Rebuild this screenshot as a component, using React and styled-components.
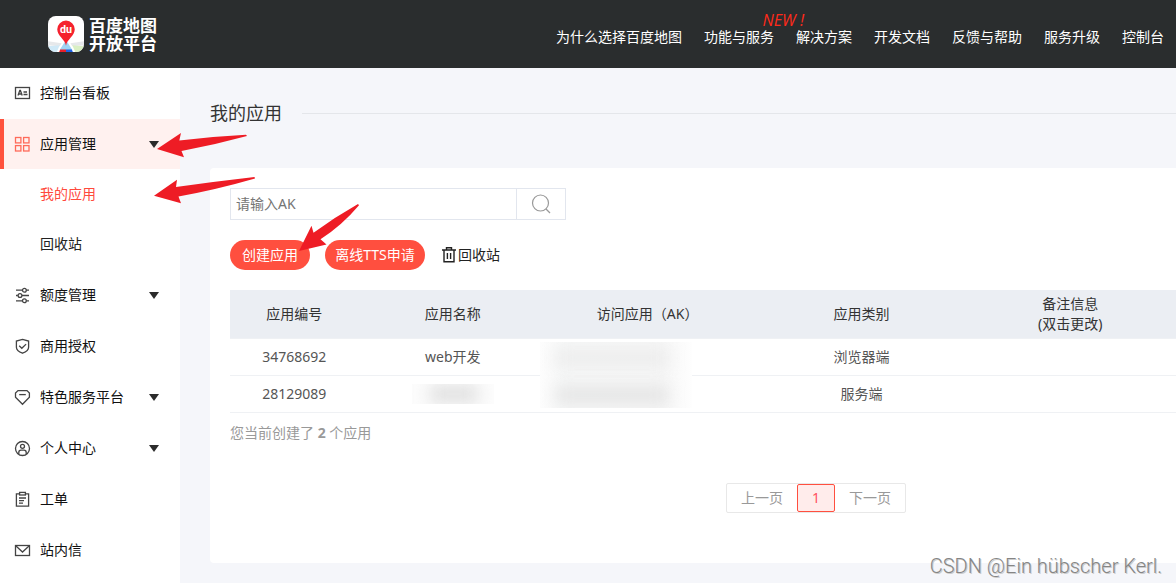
import React from 'react'
import styled, { createGlobalStyle } from 'styled-components';

const GlobalStyle = createGlobalStyle`
    * {
        box-sizing: border-box;
    }

    body {
        margin: 0;
        font-family: "Noto Sans", "Noto Sans CJK SC", sans-serif;
        font-size: 14px;
        line-height: 20px;
        color: #333;
        background-color: #f5f6fa;
    }

    a {
        color: inherit;
        text-decoration: none;
    }

    button, input {
        font: inherit;
    }
`

const Page = styled.div`
    position: relative;
    min-height: 100vh;
    display: flex;
    flex-direction: column;
    overflow: hidden;
`

const Header = styled.header`
    display: flex;
    justify-content: space-between;
    align-items: center;
    height: 68px;
    padding: 0 12px 0 48px;
    background-color: #2a2d2e;
    color: #fff;
`

const Logo = styled.a`
    display: flex;
    align-items: center;
    gap: 5px;
    font-family: "Noto Sans CJK SC", sans-serif;
    font-size: 17px;
    font-weight: 700;
    line-height: 18px;
`

const TopNav = styled.nav`
    display: flex;
    gap: 22px;
    padding-top: 6px;
    white-space: nowrap;
`

const TopLink = styled.a`
    position: relative;
`

const NewBadge = styled.span`
    position: absolute;
    right: -30px;
    top: -17px;
    color: #ff2a1a;
    font-family: "Open Sans", sans-serif;
    font-size: 16px;
    font-style: italic;
    font-weight: 500;
`

const Body = styled.div`
    flex: 1;
    display: flex;
`

const Sidebar = styled.nav`
    flex: 0 0 180px;
    display: flex;
    flex-direction: column;
    gap: 1px;
    background-color: #fff;
`

const MenuItem = styled.a`
    display: flex;
    align-items: center;
    height: 50px;
    padding: 0 21px 0 ${(props) => (props.$active ? '10px' : '14px')};
    border-left: ${(props) => (props.$active ? '4px solid #ff523d' : 'none')};
    background-color: ${(props) => (props.$active ? '#fff1ef' : 'transparent')};
    color: #111;

    .icon {
        margin-right: 9px;
        color: ${(props) => (props.$active ? '#ff6b5a' : '#444')};
    }

    .caret {
        margin-left: auto;
    }
`

const SubMenu = styled.div`
    margin-top: -1px;
`

const SubItem = styled.a`
    display: flex;
    align-items: center;
    height: 50px;
    padding-left: 40px;
    color: ${(props) => (props.$active ? '#ff4a3d' : '#222')};
`

const Content = styled.main`
    flex: 1;
    min-width: 0;
    padding: 0 0 20px 30px;
`

const TitleRow = styled.div`
    display: flex;
    align-items: center;
    gap: 20px;
    height: 90px;
    margin-bottom: 10px;

    h1 {
        margin: 0;
        font-size: 18px;
        font-weight: 400;
    }

    &::after {
        content: '';
        flex: 1;
        height: 1px;
        background-color: #e4e6ea;
    }
`

const Panel = styled.section`
    padding: 20px 0 50px 20px;
    border-radius: 4px 0 0 4px;
    background-color: #fff;
`

const SearchBox = styled.form`
    display: flex;
    width: 336px;
    height: 32px;
    border: 1px solid #e2e6ee;

    input {
        flex: 1;
        min-width: 0;
        padding: 0 5px;
        border: none;
        outline: none;
        background: none;
    }

    input::placeholder {
        color: #757575;
    }

    button {
        display: flex;
        align-items: center;
        justify-content: center;
        width: 49px;
        padding: 0;
        border: none;
        border-left: 1px solid #e2e6ee;
        background: none;
    }
`

const Actions = styled.div`
    display: flex;
    align-items: center;
    gap: 15px;
    margin: 20px 0;
`

const PillButton = styled.button`
    height: 30px;
    padding: 0;
    width: ${(props) => (props.$wide ? '100px' : '80px')};
    border: none;
    border-radius: 15px;
    background-color: #ff4f3f;
    color: #fff;
`

const RecycleLink = styled.a`
    display: flex;
    align-items: center;
    gap: 2px;
    padding-left: 2px;
    color: #222;
`

const Table = styled.table`
    width: 100%;
    table-layout: fixed;
    border-collapse: separate;
    border-spacing: 0;
    text-align: center;

    th, td {
        position: relative;
        padding: 0;
        border-bottom: 1px solid #eff1f4;
    }

    th {
        height: 49px;
        background-color: #ebeef3;
        font-weight: 400;
    }

    th:last-child {
        padding-right: 10px;
    }

    td {
        height: 37px;
        color: #555;
    }
`

const Col = styled.col`
    width: ${(props) => props.$width};
`

const NameSmudge = styled.div`
    position: relative;
    width: 82px;
    height: 20px;
    margin: 0 auto;
    background-color: #fcfcfc;
    overflow: hidden;

    &::before {
        content: '';
        position: absolute;
        left: 18px;
        top: 1px;
        width: 48px;
        height: 18px;
        background-color: #e0e0e0;
        filter: blur(8px);
    }
`

const KeySmudge = styled.div`
    position: absolute;
    z-index: 1;
    left: -7px;
    top: 3px;
    width: 152px;
    height: 66px;
    background: linear-gradient(to right, #fdfdfd, #f6f7f7 16%, #f6f6f6 80%, #fefefe);
    overflow: hidden;

    &::before, &::after {
        content: '';
        position: absolute;
        left: 16px;
        width: 112px;
        height: 16px;
        background-color: #ececec;
        filter: blur(8px);
    }

    &::before {
        top: 8px;
    }

    &::after {
        bottom: 5px;
        background-color: #e4e4e4;
    }
`

const Count = styled.p`
    margin: 10px 0 40px;
    color: #999;
`

const Pagination = styled.nav`
    display: flex;
    justify-content: flex-end;
    padding-right: 270px;
`

const PageList = styled.div`
    display: flex;
    border: 1px solid #e8e8e8;
    border-radius: 2px;
`

const PageButton = styled.button`
    width: ${(props) => (props.$current ? '38px' : '70px')};
    height: 28px;
    padding: 0;
    border: ${(props) => (props.$current ? '1px solid #ff4f3f' : 'none')};
    border-radius: 2px;
    background-color: ${(props) => (props.$current ? '#ffeceb' : 'transparent')};
    color: ${(props) => (props.$current ? '#ff4f5f' : '#999')};
`

const Arrows = styled.svg`
    position: absolute;
    z-index: 2;
    left: 0;
    top: 0;
    pointer-events: none;
`

const Watermark = styled.div`
    position: absolute;
    right: 14px;
    bottom: 5px;
    color: #858585;
    font-family: Roboto, sans-serif;
    font-size: 20px;
    font-weight: 300;
    line-height: 24px;
    text-shadow: 1px 1px 0 #ccc;
`

const paths = {
    board: (
        <>
            <rect x="1.5" y="2.5" width="14" height="11" />
            <path d="M4 10.5 5.8 5.5h.6L8.2 10.5M4.8 9h2.6M9.5 7h3.5M9.5 9.5h4" />
        </>
    ),
    apps: (
        <>
            <rect x="1.5" y="1.5" width="5.4" height="5.4" />
            <rect x="9.6" y="1.5" width="5.4" height="5.4" />
            <rect x="1.5" y="9.6" width="5.4" height="5.4" />
            <rect x="9.6" y="9.6" width="5.4" height="5.4" />
        </>
    ),
    quota: (
        <>
            <path d="M2 3.2h6.2M12.4 3.2H15M2 8.5h1.8M8 8.5h7M2 13.8h6.2M12.4 13.8H15" />
            <circle cx="10.4" cy="3.2" r="1.9" />
            <circle cx="6" cy="8.5" r="1.9" />
            <circle cx="10.4" cy="13.8" r="1.9" />
        </>
    ),
    shield: (
        <>
            <path d="M8.5 1.3 14.6 3v6.2c0 3-3 4.8-6.1 6-3.1-1.2-6.1-3-6.1-6V3z" />
            <path d="m5.2 7.8 2.6 2.5 4.3-4.2" />
        </>
    ),
    feature: (
        <>
            <path d="M4 1.6h9l2.4 2.4v4.2L8.5 15.3 1.5 8.2V4z" />
            <path d="M5.2 5.6h6.6" />
        </>
    ),
    user: (
        <>
            <circle cx="8.5" cy="8.5" r="7" />
            <circle cx="8.5" cy="6.3" r="2" />
            <path d="M4.8 14v-1.6c0-1.4.9-2.2 2.2-2.2h3c1.3 0 2.2.8 2.2 2.2V14" />
        </>
    ),
    ticket: (
        <>
            <path d="M5.4 2.8h-3v12.4h12.2V2.8h-3" />
            <rect x="5.6" y="1.4" width="5.8" height="2.6" />
            <path d="M5 7h7M5 9.6h5M5 12.2h4" />
        </>
    ),
    mail: (
        <>
            <rect x="1.5" y="3.5" width="14" height="10" />
            <path d="m2 4 6.5 6L15 4" />
        </>
    ),
};

function MenuIcon({ name }) {
    return (
        <svg className="icon" width="17" height="17" viewBox="0 0 17 17" fill="none" stroke="currentColor" strokeWidth="1.3" aria-hidden="true">
            {paths[name]}
        </svg>
    )
}

function LogoMark() {
    return (
        <svg width="36" height="36" viewBox="0 0 37 37" aria-hidden="true">
            <defs>
                <clipPath id="mark">
                    <rect width="37" height="37" rx="8" />
                </clipPath>
            </defs>
            <g clipPath="url(#mark)">
                <rect width="37" height="37" fill="#fff" />
                <path d="M0 26l14 2-2 3-12-1zM37 26l-14 2 2 3 12-1z" fill="#e6e8ea" />
                <path d="M0 31l12-1-3 7H0z" fill="#cfe9f7" />
                <path d="M37 31l-12-1 3 7h9z" fill="#d9efc4" />
                <path d="M17 27h3l5 8H12z" fill="#9fd4f3" />
                <path d="M12.5 34.5h6V37h-7z" fill="#e8202a" />
                <path d="M18.5 34.5h6l1 2.5h-7z" fill="#1f62e0" />
                <path d="M18.5 30.5C17.5 24 9.5 20.5 9.5 13.7a9 9 0 0 1 18 0C27.5 20.500 19.500 24 18.500 30.500z" fill="#f5222d" />
            </g>
            <text x="18.5" y="17.5" fill="#fff" fontFamily="Roboto, sans-serif" fontSize="11" fontWeight="700" textAnchor="middle">du</text>
        </svg>
    )
}

const topLinks = ['为什么选择百度地图', '功能与服务', '解决方案', '开发文档', '反馈与帮助', '服务升级', '控制台'];

const menu = [
    { icon: 'board', label: '控制台看板' },
    {
        icon: 'apps',
        label: '应用管理',
        caret: true,
        active: true,
        children: [{ label: '我的应用', active: true }, { label: '回收站' }],
    },
    { icon: 'quota', label: '额度管理', caret: true },
    { icon: 'shield', label: '商用授权' },
    { icon: 'feature', label: '特色服务平台', caret: true },
    { icon: 'user', label: '个人中心', caret: true },
    { icon: 'ticket', label: '工单' },
    { icon: 'mail', label: '站内信' },
];

const apps = [
    { id: '34768692', name: 'web开发', type: '浏览器端' },
    { id: '28129089', name: null, type: '服务端' },
];

function App() {
    return (
        <>
            <GlobalStyle />
            <Page>
                <Header>
                    <Logo href="#">
                        <LogoMark />
                        <span>百度地图<br />开放平台</span>
                    </Logo>
                    <TopNav>
                        {topLinks.map((label) => (
                            <TopLink href="#" key={label}>
                                {label}
                                {label === '功能与服务' && <NewBadge>NEW !</NewBadge>}
                            </TopLink>
                        ))}
                    </TopNav>
                </Header>

                <Body>
                    <Sidebar>
                        {menu.map((item) => (
                            <React.Fragment key={item.label}>
                                <MenuItem href="#" $active={item.active}>
                                    <MenuIcon name={item.icon} />
                                    {item.label}
                                    {item.caret && (
                                        <svg className="caret" width="10" height="7" viewBox="0 0 10 7" aria-hidden="true">
                                            <path d="M0 0h10L5 7z" fill="#2b2b2b" />
                                        </svg>
                                    )}
                                </MenuItem>
                                {item.children && (
                                    <SubMenu>
                                        {item.children.map((child) => (
                                            <SubItem href="#" key={child.label} $active={child.active}>{child.label}</SubItem>
                                        ))}
                                    </SubMenu>
                                )}
                            </React.Fragment>
                        ))}
                    </Sidebar>

                    <Content>
                        <TitleRow>
                            <h1>我的应用</h1>
                        </TitleRow>
                        <Panel>
                            <SearchBox onSubmit={(e) => e.preventDefault()}>
                                <input type="text" placeholder="请输入AK" aria-label="请输入AK" />
                                <button type="submit" aria-label="搜索">
                                    <svg width="20" height="20" viewBox="0 0 20 20" fill="none" stroke="#999" strokeWidth="1.2">
                                        <circle cx="9.5" cy="9" r="8" />
                                        <path d="m15 15 4 4" />
                                    </svg>
                                </button>
                            </SearchBox>

                            <Actions>
                                <PillButton type="button">创建应用</PillButton>
                                <PillButton type="button" $wide>离线TTS申请</PillButton>
                                <RecycleLink href="#">
                                    <svg width="14" height="16" viewBox="0 0 14 16" fill="none" stroke="#222" strokeWidth="1.4" aria-hidden="true">
                                        <path d="M0 3h14M4.5 3V.8h5V3M2 3v11.8h10V3M5.4 6v6M8.6 6v6" />
                                    </svg>
                                    回收站
                                </RecycleLink>
                            </Actions>

                            <Table>
                                <colgroup>
                                    <Col $width="13.6%" />
                                    <Col $width="19.9%" />
                                    <Col $width="21.3%" />
                                    <Col $width="23.9%" />
                                    <Col $width="21.3%" />
                                </colgroup>
                                <thead>
                                    <tr>
                                        <th>应用编号</th>
                                        <th>应用名称</th>
                                        <th>访问应用（AK）</th>
                                        <th>应用类别</th>
                                        <th>备注信息<br />(双击更改)</th>
                                    </tr>
                                </thead>
                                <tbody>
                                    {apps.map((app, index) => (
                                        <tr key={app.id}>
                                            <td>{app.id}</td>
                                            <td>{app.name || <NameSmudge />}</td>
                                            <td>{index === 0 && <KeySmudge />}</td>
                                            <td>{app.type}</td>
                                            <td></td>
                                        </tr>
                                    ))}
                                </tbody>
                            </Table>

                            <Count>您当前创建了 <b>{apps.length}</b> 个应用</Count>

                            <Pagination>
                                <PageList>
                                    <PageButton type="button">上一页</PageButton>
                                    <PageButton type="button" $current>1</PageButton>
                                    <PageButton type="button">下一页</PageButton>
                                </PageList>
                            </Pagination>
                        </Panel>
                    </Content>
                </Body>

                <Arrows width="380" height="270" viewBox="0 0 380 270" fill="#ee1c25" aria-hidden="true">
                    <path d="M157 149 181 133 179.3 140.5Q213 136.5 246 134.8L247 136Q214 145 181.5 151L184 157.3Z" />
                    <path d="M154 195.7 177 179.7 176 187Q215 181.5 254.5 177L255 178.5Q217 189.5 178.5 196.5L181 203.3Z" />
                    <path d="M299 251 311.5 225.7 313.5 232.8Q335 217 358 204L359 205.3Q342 225.5 320.5 239.3L326.5 244.5Z" />
                </Arrows>
                <Watermark>CSDN @Ein hübscher Kerl.</Watermark>
            </Page>
        </>
    )
}

export default App;
